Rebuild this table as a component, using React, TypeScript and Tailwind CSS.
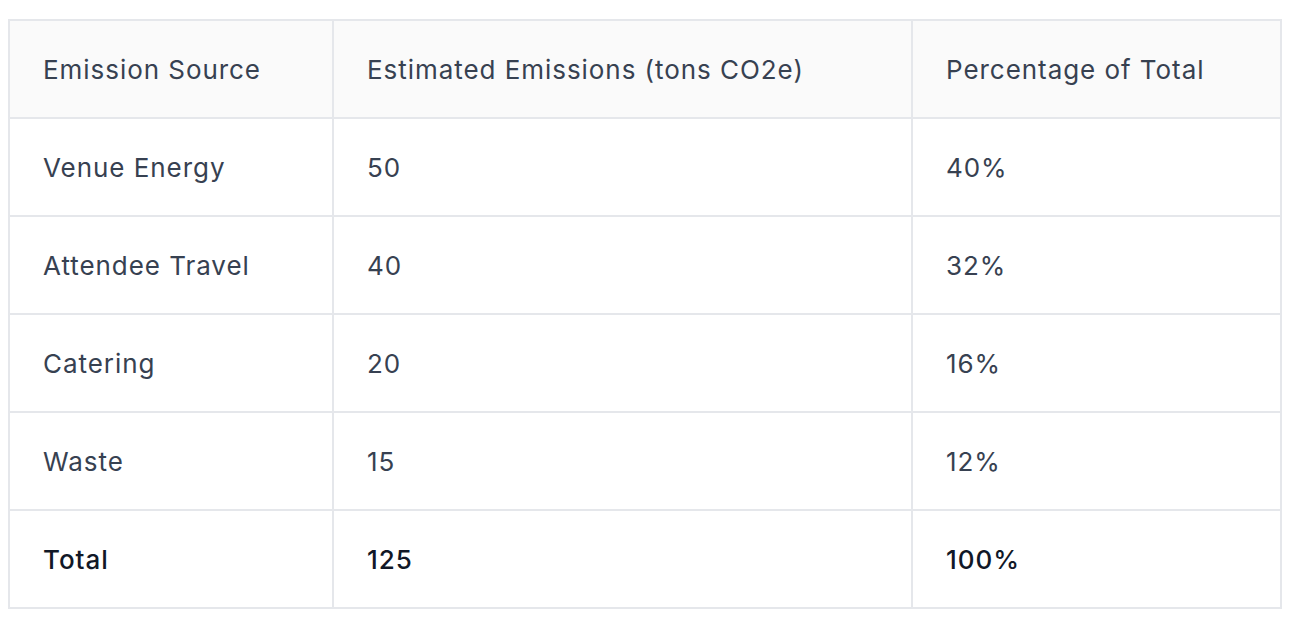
import React from "react";

const rows = [
  ["Venue Energy", "50", "40%"],
  ["Attendee Travel", "40", "32%"],
  ["Catering", "20", "16%"],
  ["Waste", "15", "12%"],
];

export default function App() {
  const cell = "border-2 border-[#e5e7eb] pl-[33px] pr-4 h-[98px] align-middle text-left";
  return (
    <div className="w-[1294px] h-[626px] bg-white pt-[19px] pl-[8px]" style={{ fontFamily: "Inter, 'Noto Sans', sans-serif" }}>
      <table className="border-collapse table-fixed w-[1272px] text-[26px] tracking-[0.95px] text-[#374151]">
        <colgroup>
          <col className="w-[324px]" />
          <col className="w-[579px]" />
          <col className="w-[369px]" />
        </colgroup>
        <thead>
          <tr className="bg-[#fafafa]">
            <th className={cell + " font-normal"}>Emission Source</th>
            <th className={cell + " font-normal"}>Estimated Emissions (tons CO2e)</th>
            <th className={cell + " font-normal"}>Percentage of Total</th>
          </tr>
        </thead>
        <tbody>
          {rows.map((r) => (
            <tr key={r[0]}>
              {r.map((c, i) => (
                <td key={i} className={cell}>{c}</td>
              ))}
            </tr>
          ))}
          <tr className="text-[#111827] font-[450]">
            <td className={cell}>Total</td>
            <td className={cell}>125</td>
            <td className={cell}>100%</td>
          </tr>
        </tbody>
      </table>
    </div>
  );
}
